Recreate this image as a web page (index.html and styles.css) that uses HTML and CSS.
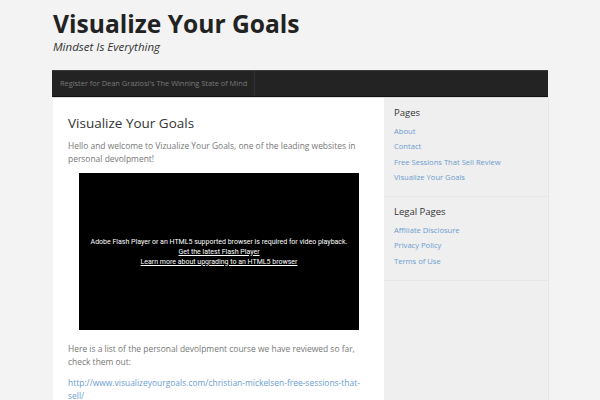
FILE: index.html
```html
<!DOCTYPE html>
<html>
<head>
    <title>Visualize Your Goals</title>
    <link rel="stylesheet" href="styles.css">
</head>
<body>
    <div class="wrapper">
        <div class="header">
            <h1 class="site-title">Visualize Your Goals</h1>
            <div class="site-desc">Mindset Is Everything</div>
        </div>

        <div class="menu">
            <a href="#">Register for Dean Graziosi's The Winning State of Mind</a>
        </div>

        <div class="container">
            <div class="content">
                <h2 class="entry-title">Visualize Your Goals</h2>
                <p>Hello and welcome to Vizualize Your Goals, one of the leading websites in personal devolpment!</p>
                <div class="video">
                    <p>Adobe Flash Player or an HTML5 supported browser is required for video playback.<br>
                    <a href="#">Get the latest Flash Player </a><br>
                    <a href="#">Learn more about upgrading to an HTML5 browser</a></p>
                </div>
                <p>Here is a list of the personal devolpment course we have reviewed so far, check them out:</p>
                <p><a href="#">http://www.visualizeyourgoals.com/christian-mickelsen-free-sessions-that-sell/</a></p>
            </div>

            <div class="sidebar">
                <div class="widget">
                    <h3>Pages</h3>
                    <a href="#">About</a>
                    <a href="#">Contact</a>
                    <a href="#">Free Sessions That Sell Review</a>
                    <a href="#">Visualize Your Goals</a>
                </div>
                <div class="widget">
                    <h3>Legal Pages</h3>
                    <a href="#">Affiliate Disclosure</a>
                    <a href="#">Privacy Policy</a>
                    <a href="#">Terms of Use</a>
                </div>
            </div>
        </div>
    </div>
</body>
</html>
```

FILE: styles.css
```css
body {
    background-color: #f3f3f3;
    color: #777;
    font-family: "Open Sans", sans-serif;
    margin: 0;
}

a {
    color: #6b9ccf;
    text-decoration: none;
}

.wrapper {
    width: 496px;
    margin: 0 auto;
}

.header {
    padding: 11px 0 0 1px;
    height: 59px;
}

.site-title {
    margin: 0;
    font-size: 24.6px;
    line-height: 26px;
    font-weight: bold;
    color: #222;
}

.site-desc {
    margin-top: 3px;
    font-size: 11.5px;
    line-height: 14px;
    font-style: italic;
    color: #333;
}

.menu {
    display: flex;
    background-color: #232323;
    border-top: 1px solid #3c3c3c;
    border-bottom: 1px solid #111;
    height: 25px;
}

.menu a {
    color: #7a7a7a;
    font-size: 7.4px;
    line-height: 25px;
    padding: 0 7px 0 8px;
    border-right: 1px solid #333;
}

.container {
    display: flex;
    border-top: 1px solid #dcdcdc;
    margin-left: 1px;
}

.content {
    width: 302px;
    background-color: #fff;
    padding: 15px 14px 0 15px;
    font-size: 8.45px;
    line-height: 13px;
}

.entry-title {
    font-size: 13.5px;
    font-weight: normal;
    color: #333;
    margin: 0 0 6px 0;
    line-height: 20px;
}

.content p {
    margin: 0 0 8px 0;
}

.video {
    width: 280px;
    height: 157px;
    margin: 0 auto 12px;
    background-color: #000;
    display: flex;
    align-items: center;
    justify-content: center;
}

.content .video p {
    margin: 0;
    color: #fff;
    text-align: center;
    font-family: Roboto, sans-serif;
    font-size: 7px;
    line-height: 10px;
}

.video a {
    color: #fff;
    text-decoration: underline;
}

.sidebar {
    flex: 1;
    background-color: #efefef;
    box-shadow: 1px 0 0 #e6e6e6;
}

.widget {
    padding: 8px 11px 11px 10px;
    border-bottom: 1px solid #e6e6e6;
}

.widget h3 {
    margin: 0 0 4px 0;
    font-size: 9.5px;
    line-height: 14px;
    font-weight: normal;
    color: #333;
}

.widget a {
    display: block;
    font-size: 7.6px;
    line-height: 15.3px;
}
```
